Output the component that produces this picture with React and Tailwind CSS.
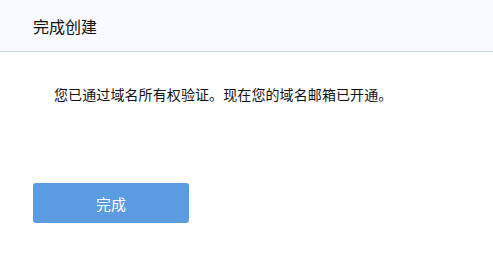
export default function App() {
  return (
    <div
      className="w-[493px] h-[269px] bg-white overflow-hidden"
      style={{ fontFamily: '"Noto Sans CJK SC", "Liberation Sans", sans-serif' }}
    >
      {/* 标题栏 */}
      <div className="h-[52px] bg-[#f8faff] border-b border-[#c9d1d8] flex items-center pl-[33px]">
        <h1 className="text-[16px] text-[#111] font-normal leading-none">完成创建</h1>
      </div>

      {/* 内容 */}
      <div className="pl-[54px] pt-[34px]">
        <p className="text-[14px] text-[#111] leading-[16px] tracking-[0.1px]">
          您已通过域名所有权验证。现在您的域名邮箱已开通。
        </p>
      </div>

      <div className="pl-[33px] pt-[81px]">
        <button
          type="button"
          className="w-[156px] h-[40px] rounded-[3px] bg-[#5b9be0] text-white text-[15px] leading-none"
        >
          完成
        </button>
      </div>
    </div>
  );
}
